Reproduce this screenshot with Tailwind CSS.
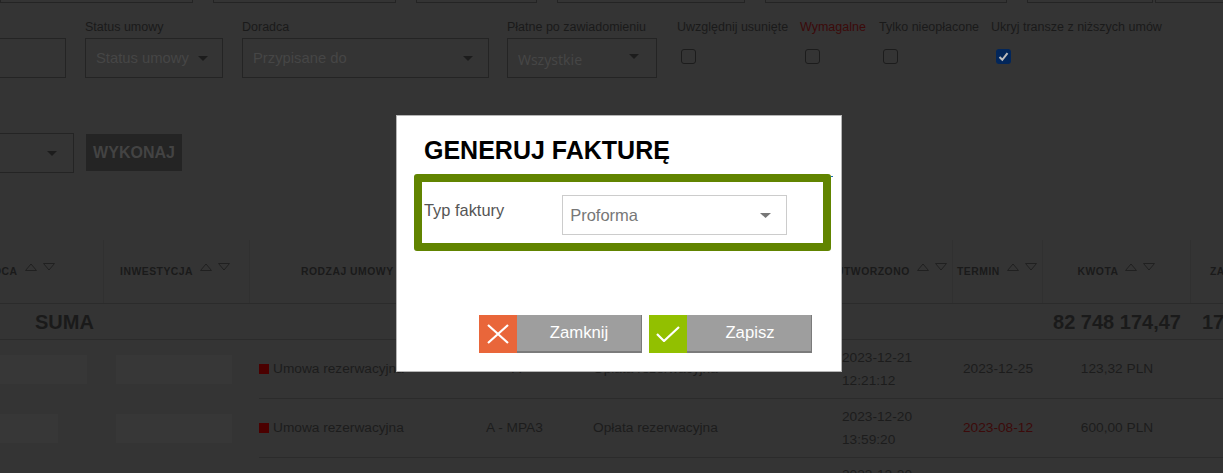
<!DOCTYPE html>
<html lang="pl">
<head>
  <meta charset="UTF-8" />
  <title>Generuj fakturę</title>
  <script src="https://cdn.jsdelivr.net/npm/@tailwindcss/browser@4"></script>
</head>
<body class="relative h-[473px] w-[1223px] overflow-hidden bg-[#343434] font-['Liberation_Sans',Arial,sans-serif] text-[#1a1a1a]">

  <!-- cut off row of inputs -->
  <div class="flex h-[3px] items-end overflow-hidden">
    <div class="h-[30px] w-[193px] shrink-0 border border-[#242424]"></div>
    <div class="ml-[20px] h-[30px] w-[183px] shrink-0 border border-[#242424]"></div>
    <div class="ml-[20px] h-[30px] w-[121px] shrink-0 border border-[#242424]"></div>
    <div class="ml-[20px] h-[30px] w-[188px] shrink-0 border border-[#242424]"></div>
    <div class="ml-[20px] h-[30px] w-[242px] shrink-0 border border-[#242424]"></div>
    <div class="ml-[20px] h-[30px] w-[126px] shrink-0 border border-[#242424]"></div>
    <div class="ml-[2px] h-[30px] w-[80px] shrink-0 border border-[#242424]"></div>
  </div>

  <!-- filters -->
  <div class="mt-[17px] flex text-[12.5px] leading-[14px]">
    <div class="w-[66px] shrink-0">
      <div class="h-[18px]"></div>
      <div class="h-[40px] border border-[#242424] border-l-0"></div>
    </div>
    <div class="ml-[19px] w-[138px] shrink-0">
      <div class="h-[18px] whitespace-nowrap">Status umowy</div>
      <div class="flex h-[40px] items-center justify-between border border-[#242424] pl-[10px] pr-[14px] text-[14.8px] text-[#464646]">
        <span class="whitespace-nowrap">Status umowy</span>
        <svg width="10" height="5" viewBox="0 0 10 5"><path d="M0 0h10L5 5z" fill="#1c1c1c"/></svg>
      </div>
    </div>
    <div class="ml-[19px] w-[247px] shrink-0">
      <div class="h-[18px]">Doradca</div>
      <div class="flex h-[40px] items-center justify-between border border-[#242424] pl-[10px] pr-[15px] text-[14.8px] text-[#464646]">
        <span>Przypisane do</span>
        <svg width="10" height="5" viewBox="0 0 10 5"><path d="M0 0h10L5 5z" fill="#1c1c1c"/></svg>
      </div>
    </div>
    <div class="ml-[18px] w-[150px] shrink-0">
      <div class="h-[18px] whitespace-nowrap">Płatne po zawiadomieniu</div>
      <div class="flex h-[40px] items-center justify-between border border-[#242424] pl-[10px] pr-[17px] text-[14.8px] text-[#464646]">
        <span class="pt-[3px] font-['Noto_Sans',sans-serif] text-[14px]">Wszystkie</span>
        <svg class="mb-[4px]" width="10" height="5" viewBox="0 0 10 5"><path d="M0 0h10L5 5z" fill="#1c1c1c"/></svg>
      </div>
    </div>
    <div class="ml-[20px] w-[123px] shrink-0">
      <div class="h-[29px] whitespace-nowrap">Uwzględnij usunięte</div>
      <div class="ml-[4px] h-[15px] w-[15px] rounded-[3px] border border-[#1c1c1c]"></div>
    </div>
    <div class="w-[79px] shrink-0">
      <div class="h-[29px] text-[#3c0a0a]">Wymagalne</div>
      <div class="ml-[5px] h-[15px] w-[15px] rounded-[3px] border border-[#1c1c1c]"></div>
    </div>
    <div class="w-[112px] shrink-0">
      <div class="h-[29px] whitespace-nowrap">Tylko nieopłacone</div>
      <div class="ml-[4px] h-[15px] w-[15px] rounded-[3px] border border-[#1c1c1c]"></div>
    </div>
    <div class="shrink-0">
      <div class="h-[29px] whitespace-nowrap">Ukryj transze z niższych umów</div>
      <div class="ml-[5px] flex h-[15px] w-[15px] items-center justify-center rounded-[3px] bg-[#02265a]">
        <svg width="11" height="11" viewBox="0 0 11 11"><path d="M1.5 6l2.8 2.8 5.2-6.6" fill="none" stroke="#bdbdbd" stroke-width="2"/></svg>
      </div>
    </div>
  </div>

  <!-- bulk action -->
  <div class="mt-[55px] flex items-start">
    <div class="flex h-[40px] w-[74px] items-center justify-end border border-[#242424] border-l-0 pr-[16px]">
      <svg width="10" height="5" viewBox="0 0 10 5"><path d="M0 0h10L5 5z" fill="#1c1c1c"/></svg>
    </div>
    <button class="ml-[12px] mt-[1px] flex h-[37px] w-[96px] items-center justify-center bg-[#242424] text-[16px] font-bold text-[#434343]">WYKONAJ</button>
  </div>

  <!-- table header -->
  <div class="mt-[67px] grid h-[64px] grid-cols-[104px_146px_226px_108px_258px_111px_90px_148px_32px] border-b border-[#2b2b2b] text-[10.4px] font-bold tracking-[0.5px] whitespace-nowrap">
    <div class="-ml-[7px] flex items-center gap-[7px] border-r border-[#303030] pt-[1px]">
      <span>OCA</span>
      <svg class="mb-[10px]" width="30" height="8" viewBox="0 0 30 8"><path d="M.5 7.5L6 1l5.5 6.5zM18.5.5h11L24 7z" fill="none" stroke="#202020"/></svg>
    </div>
    <div class="flex items-center gap-[7px] border-r border-[#303030] pl-[16px] pt-[1px]">
      <span>INWESTYCJA</span>
      <svg class="mb-[10px]" width="30" height="8" viewBox="0 0 30 8"><path d="M.5 7.5L6 1l5.5 6.5zM18.5.5h11L24 7z" fill="none" stroke="#202020"/></svg>
    </div>
    <div class="flex items-center pl-[51px]"><span>RODZAJ UMOWY</span></div>
    <div></div>
    <div class="border-r border-[#303030]"></div>
    <div class="flex items-center gap-[7px] border-r border-[#303030] pt-[1px]">
      <span class="-ml-[6px]">UTWORZONO</span>
      <svg class="mb-[10px]" width="30" height="8" viewBox="0 0 30 8"><path d="M.5 7.5L6 1l5.5 6.5zM18.5.5h11L24 7z" fill="none" stroke="#202020"/></svg>
    </div>
    <div class="flex items-center gap-[7px] border-r border-[#303030] pl-[4px] pt-[1px]">
      <span>TERMIN</span>
      <svg class="mb-[10px]" width="30" height="8" viewBox="0 0 30 8"><path d="M.5 7.5L6 1l5.5 6.5zM18.5.5h11L24 7z" fill="none" stroke="#202020"/></svg>
    </div>
    <div class="flex items-center justify-center gap-[7px] border-r border-[#303030] pt-[1px]">
      <span>KWOTA</span>
      <svg class="mb-[10px]" width="30" height="8" viewBox="0 0 30 8"><path d="M.5 7.5L6 1l5.5 6.5zM18.5.5h11L24 7z" fill="none" stroke="#202020"/></svg>
    </div>
    <div class="flex items-center pl-[19px] pt-[1px]"><span>ZA</span></div>
  </div>

  <!-- sum row -->
  <div class="grid h-[36px] grid-cols-[1043px_148px_32px] items-center border-b border-[#2b2b2b] text-[20px] leading-none font-bold whitespace-nowrap">
    <div class="pl-[35px]">SUMA</div>
    <div class="text-center">82 748 174,47</div>
    <div class="pl-[11px]">17</div>
  </div>

  <!-- rows -->
  <div class="flex h-[59px] text-[13.7px] whitespace-nowrap text-[#1c1c1c]">
    <div class="flex w-[259px] shrink-0 items-center pb-[1px]">
      <div class="h-[29px] w-[87px] bg-[#373737]"></div>
      <div class="ml-[29px] h-[29px] w-[116px] bg-[#373737]"></div>
    </div>
    <div class="grid flex-1 grid-cols-[217px_108px_258px_111px_90px_148px] items-center border-b border-[#2b2b2b]">
      <div class="flex items-center"><span class="mr-[4px] h-[10px] w-[10px] bg-[#4b0000]"></span>Umowa rezerwacyjna</div>
      <div class="pl-[36px]">A</div>
      <div class="pl-[9px]">Opłata rezerwacyjna</div>
      <div class="leading-[23px]">2023-12-21<br />12:21:12</div>
      <div class="pl-[10px]">2023-12-25</div>
      <div class="text-center">123,32 PLN</div>
    </div>
  </div>
  <div class="flex h-[59px] text-[13.7px] whitespace-nowrap text-[#1c1c1c]">
    <div class="flex w-[259px] shrink-0 items-center pb-[1px]">
      <div class="h-[29px] w-[58px] bg-[#373737]"></div>
      <div class="ml-[58px] h-[29px] w-[116px] bg-[#373737]"></div>
    </div>
    <div class="grid flex-1 grid-cols-[217px_108px_258px_111px_90px_148px] items-center border-b border-[#2b2b2b]">
      <div class="flex items-center"><span class="mr-[4px] h-[10px] w-[10px] bg-[#4b0000]"></span>Umowa rezerwacyjna</div>
      <div class="pl-[10px]">A - MPA3</div>
      <div class="pl-[9px]">Opłata rezerwacyjna</div>
      <div class="leading-[23px]">2023-12-20<br />13:59:20</div>
      <div class="pl-[10px] text-[#3c0a0a]">2023-08-12</div>
      <div class="text-center">600,00 PLN</div>
    </div>
  </div>
  <div class="ml-[842px] mt-[5px] text-[13.7px] leading-[23px] text-[#1c1c1c]">2023-12-20</div>

  <!-- modal -->
  <div class="absolute left-[396px] top-[115px] flex h-[257px] w-[446px] flex-col border border-[#b5b5b5] bg-white">
    <h2 class="pl-[27px] pt-[19px] text-[25px] leading-[30px] font-bold text-black">GENERUJ FAKTURĘ</h2>
    <div class="relative ml-[17px] mt-[9px] flex h-[77px] w-[417px] rounded-[3px] border-[8px] border-[#618400] pl-[2px]">
      <span class="pt-[18px] text-[16.4px] leading-[20px] text-[#555]">Typ faktury</span>
      <div class="ml-[58px] mt-[13px] flex h-[40px] w-[225px] items-center justify-between border border-[#ccc] pl-[7px] pr-[15px] text-[16.5px] text-[#777]">
        <span class="pt-[1px]">Proforma</span>
        <svg width="11" height="5" viewBox="0 0 11 5"><path d="M0 0h11L5.5 5z" fill="#777"/></svg>
      </div>
      <span class="absolute -right-[10px] -top-[6px] h-[1px] w-[2px] bg-[#1a6fb5]"></span>
    </div>
    <div class="mt-[64px] flex justify-end gap-[7px] pr-[29px] text-[16.7px] text-white">
      <button class="flex h-[38px] w-[163px] border-b-2 border-r border-[#7b7b7b] bg-[#9e9e9e]">
        <span class="flex h-[38px] w-[38px] shrink-0 items-center justify-center bg-[#e9663a]">
          <svg width="24" height="20" viewBox="0 0 24 20"><path d="M2 1l20 18M22 1L2 19" stroke="#fff" stroke-width="2.2" fill="none"/></svg>
        </span>
        <span class="flex-1 self-center text-center">Zamknij</span>
      </button>
      <button class="flex h-[38px] w-[163px] border-b-2 border-r border-[#7b7b7b] bg-[#9e9e9e]">
        <span class="flex h-[38px] w-[38px] shrink-0 items-center justify-center bg-[#92c000]">
          <svg width="24" height="16" viewBox="0 0 24 16"><path d="M1 8l7 7L23 1" stroke="#fff" stroke-width="2.2" fill="none"/></svg>
        </span>
        <span class="flex-1 self-center pl-[2px] text-center">Zapisz</span>
      </button>
    </div>
  </div>
</body>
</html>
